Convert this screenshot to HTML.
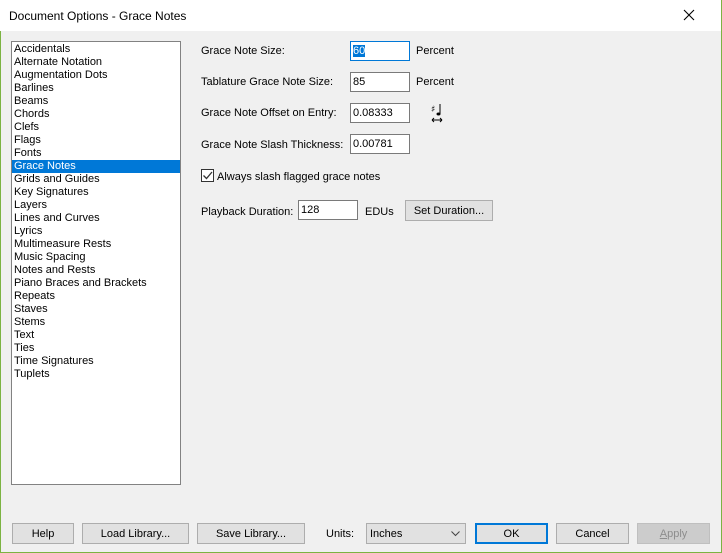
<!DOCTYPE html>
<html><head><style>
*{margin:0;padding:0;box-sizing:border-box}
body{width:722px;height:553px;background:#f0f0f0;font-family:"Liberation Sans",sans-serif;font-size:11px;color:#000;position:relative;overflow:hidden}
.win{position:absolute;left:0;top:0;width:722px;height:553px;border:1px solid #7cb342;border-top:none;background:#f0f0f0}
.title{position:absolute;left:0;top:0;width:721px;height:31px;background:#fff}
.title span{position:absolute;left:9px;top:9px;font-size:12px}
.x{position:absolute;left:683px;top:9px}
.a{position:absolute;white-space:nowrap}
.list{position:absolute;left:11px;top:41px;width:170px;height:444px;background:#fff;border:1px solid #828282;padding-top:1px}
.list div{height:13px;line-height:13px;padding-left:2px;font-size:11px}
.list .sel{background:#0078d7;color:#fff}
.in{position:absolute;background:#fff;border:1px solid #7a7a7a;height:20px;line-height:19px;padding-left:2px}
.btn{position:absolute;background:#e1e1e1;border:1px solid #adadad;height:21px;line-height:20px;text-align:center}
</style></head><body>
<div class="win"></div>
<div class="title"><span>Document Options - Grace Notes</span>
<svg class="x" width="12" height="12"><path d="M1 1L11 11M11 1L1 11" stroke="#000" stroke-width="1.1"/></svg></div>
<div class="list">
<div>Accidentals</div><div>Alternate Notation</div><div>Augmentation Dots</div><div>Barlines</div><div>Beams</div><div>Chords</div><div>Clefs</div><div>Flags</div><div>Fonts</div><div class="sel">Grace Notes</div><div>Grids and Guides</div><div>Key Signatures</div><div>Layers</div><div>Lines and Curves</div><div>Lyrics</div><div>Multimeasure Rests</div><div>Music Spacing</div><div>Notes and Rests</div><div>Piano Braces and Brackets</div><div>Repeats</div><div>Staves</div><div>Stems</div><div>Text</div><div>Ties</div><div>Time Signatures</div><div>Tuplets</div>
</div>
<div class="a" style="left:201px;top:45px">Grace Note Size:</div>
<div class="in" style="left:350px;top:41px;width:60px;border-color:#0078d7"><span style="background:#0078d7;color:#fff">60</span></div>
<div class="a" style="left:416px;top:45px">Percent</div>
<div class="a" style="left:201px;top:76px">Tablature Grace Note Size:</div>
<div class="in" style="left:350px;top:72px;width:60px">85</div>
<div class="a" style="left:416px;top:76px">Percent</div>
<div class="a" style="left:201px;top:107px">Grace Note Offset on Entry:</div>
<div class="in" style="left:350px;top:103px;width:60px">0.08333</div>
<svg class="a" style="left:429px;top:101px" width="16" height="22"><text x="2" y="11" font-size="9" font-family="DejaVu Sans">♯</text><path d="M11 3V13" stroke="#000"/><ellipse cx="9.5" cy="13" rx="2" ry="1.5" fill="#000"/><path d="M3 19H13M3 19l2-2M3 19l2 2M13 19l-2-2M13 19l-2 2" stroke="#000" fill="none"/></svg>
<div class="a" style="left:201px;top:139px">Grace Note Slash Thickness:</div>
<div class="in" style="left:350px;top:134px;width:60px">0.00781</div>
<div class="a" style="left:201px;top:169px;width:13px;height:13px;border:1px solid #333;background:#fff"><svg width="11" height="11" style="position:absolute;left:0;top:0"><path d="M1.5 5.5L4.5 8.5L10 2" stroke="#333" stroke-width="1.3" fill="none"/></svg></div>
<div class="a" style="left:217px;top:171px">Always slash flagged grace notes</div>
<div class="a" style="left:201px;top:206px">Playback Duration:</div>
<div class="in" style="left:298px;top:200px;width:60px">128</div>
<div class="a" style="left:365px;top:206px">EDUs</div>
<div class="btn" style="left:405px;top:200px;width:88px">Set Duration...</div>
<div class="btn" style="left:12px;top:523px;width:62px">Help</div>
<div class="btn" style="left:82px;top:523px;width:107px">Load Library...</div>
<div class="btn" style="left:197px;top:523px;width:108px">Save Library...</div>
<div class="a" style="left:326px;top:528px">Units:</div>
<div class="btn" style="left:366px;top:523px;width:100px;text-align:left;padding-left:3px">Inches<svg style="position:absolute;right:5px;top:7px" width="9" height="6"><path d="M0.5 0.5L4.5 4.5L8.5 0.5" stroke="#444" fill="none"/></svg></div>
<div class="btn" style="left:475px;top:523px;width:73px;border:2px solid #0078d7;line-height:18px">OK</div>
<div class="btn" style="left:556px;top:523px;width:73px">Cancel</div>
<div class="btn" style="left:637px;top:523px;width:73px;background:#ccc;border-color:#bfbfbf;color:#8d8d8d"><u>A</u>pply</div>
</body></html>
